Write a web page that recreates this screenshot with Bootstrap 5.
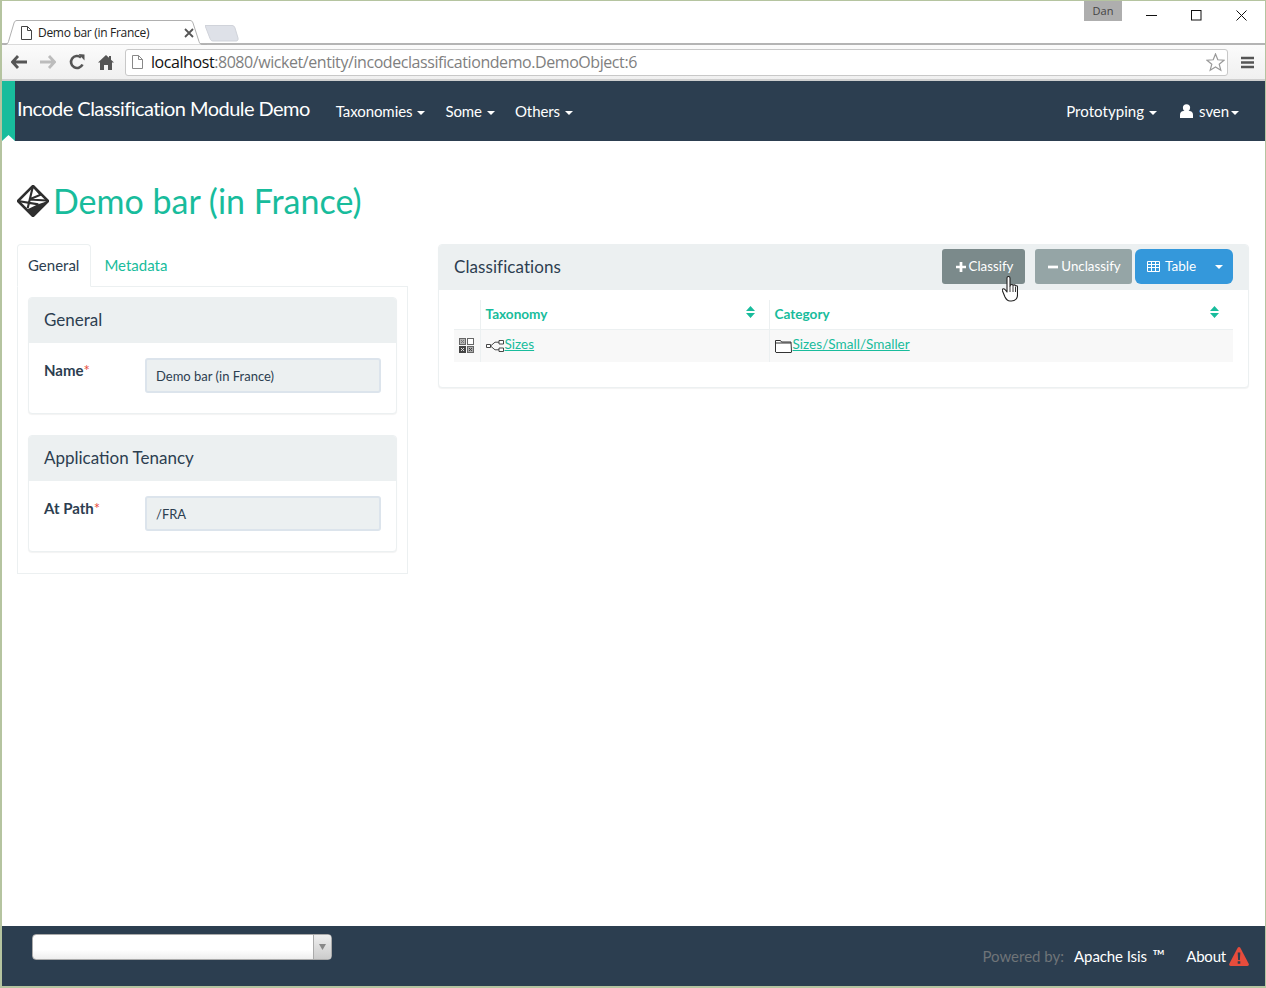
<!DOCTYPE html>
<html lang="en">
<head>
<meta charset="utf-8">
<title>Demo bar (in France)</title>
<link href="https://cdn.jsdelivr.net/npm/bootstrap@5.3.0/dist/css/bootstrap.min.css" rel="stylesheet">
<style>
html,body{height:100%}
body{font-family:"Lato","Liberation Sans",sans-serif;font-size:15px;color:#2c3e50;background:#fff;overflow:hidden}
.win-frame{width:1266px;height:988px;border:solid #b5c4a0;border-width:1px 1px 2px 2px;display:flex;flex-direction:column;overflow:hidden}
.tab-strip{height:44px;flex:none;display:flex;align-items:flex-start;background:#fff;border-bottom:2px solid #b4b4b4}
.chrome-tab{position:relative;width:203px;height:25px;margin:19px 0 0 2px;flex:none;display:flex;align-items:center;padding:0 13px 0 13px;font-family:"Open Sans","Liberation Sans",sans-serif;font-size:12px;letter-spacing:-.3px;color:#222}
.chrome-tab .tab-shape{position:absolute;left:0;top:0}
.chrome-tab>span,.chrome-tab>svg:not(.tab-shape){position:relative}
.tab-ic{margin:0 6px 0 4px}
.tab-new{margin:24px 0 0 -2px;flex:none}
.dan-tag{margin-left:auto;width:38px;height:20px;background:#aeaeae;color:#444;font-family:"Open Sans",sans-serif;font-size:11px;text-align:center;line-height:20px;flex:none}
.win-btns{display:flex;flex:none;margin:0 1px 0 7px}
.win-btns span{width:45px;height:28px;display:flex;align-items:center;justify-content:center}
.tool-bar{height:36px;flex:none;background:linear-gradient(#fbfbfb,#f0f0f0);border-bottom:2px solid #cfcfcf;display:flex;align-items:center;padding:0 11px 0 9px;gap:9px}
.tool-bar svg{flex:none}
.addr{flex:1;height:27px;margin-left:2px;background:#fff;border:1px solid #c8c8c8;border-radius:3px;display:flex;align-items:center;padding:0 2px 0 6px;font-family:"Open Sans","Liberation Sans",sans-serif;font-size:16px;color:#7f7f7f;letter-spacing:-.43px}
.addr b{font-weight:400;color:#111}
.site-nav{height:60px;flex:none;background:#2c3e50;padding:0;align-items:stretch;flex-wrap:nowrap}
.ribbon{width:13px;background:#18bc9c;flex:none;position:relative}
.ribbon::after{content:"";position:absolute;left:0;right:0;bottom:0;height:6px;background:#fff;clip-path:polygon(50% 0,100% 100%,0 100%)}
.site-nav .navbar-brand{color:#fff;font-size:20px;letter-spacing:-.55px;padding:0;margin:0 16px 0 2px;line-height:54px}
.site-nav .nav-link{color:#fff;font-size:15px;padding:0 10px;line-height:60px;letter-spacing:-.08px}
.site-nav .navbar-nav{flex-direction:row}
.site-nav .dropdown-toggle::after{border-top-width:4px;border-right-width:4px;border-left-width:4px;margin-left:5px;vertical-align:2px}
.right-nav{margin-right:16px}
.right-nav .nav-item:first-child .nav-link{letter-spacing:.05px}
.sven-link svg{margin-right:6px;vertical-align:-1px}
.site-nav .sven-link{padding-left:13px}
.site-nav .sven-link::after{margin-left:2px}
.page-body{flex:1;padding:0 16px 0 15px;min-height:0}
.page-title{color:#18bc9c;font-size:34px;font-weight:400;margin:38px 0 22px;line-height:43px;display:flex;align-items:center;gap:4px}
.cols{display:flex;gap:30px;align-items:flex-start}
.col-left{width:391px;flex:none}
.col-right{flex:1;min-width:0;position:relative}
.site-tabs{border-bottom:1px solid #ecf0f1;margin-bottom:0}
.site-tabs .nav-link{color:#18bc9c;font-size:15px;padding:10px 12px;line-height:21px;border-radius:4px 4px 0 0}
.site-tabs .nav-link.active{color:#2c3e50;padding:10px 11px 10px 10px;border-color:#ecf0f1 #ecf0f1 #fff}
.tab-body{border:1px solid #ecf0f1;border-top:0;padding:10px 10px 21px;display:flex;flex-direction:column;gap:21px}
.pane{border:1px solid #ecf0f1;border-radius:4px;box-shadow:0 1px 1px rgba(0,0,0,.05);--bs-card-bg:#fff}
.pane .card-header{background:#ecf0f1;border:0;border-radius:3px 3px 0 0;font-size:17px;line-height:24px;padding:10px 15px;height:45px;color:#2c3e50}
.field-row{display:flex;padding:15px;height:70px}
.field-label{width:101px;flex:none;font-weight:700;font-size:15px;padding-top:1px;line-height:22px}
.field-label i{color:#e74c3c;font-style:normal;font-weight:400}
.field-input{background:#ecf0f1!important;border:2px solid #dce4ec;border-radius:3px;height:35px;font-size:13px;padding:6px 9px;color:#2c3e50;flex:1;width:auto;min-width:0;opacity:1}
.pane .class-head{display:flex;align-items:flex-start;padding:4px 15px 0 15px}
.head-title{margin-right:auto;line-height:35px;letter-spacing:.08px}
.act-btn{font-size:13.3px;padding:0 10px;height:35px;line-height:33px;border-radius:3px;color:#fff;border:1px solid transparent;display:flex;align-items:center;gap:3px;white-space:nowrap}
.act-btn svg{margin-left:2px}
.act-classify{background:#7b8a8b;width:83px;margin-right:10px;justify-content:center}
.act-unclassify{background:#95a5a6;width:97px;margin-right:3px;justify-content:center}
.act-table{width:98px}
.act-table .btn{background:#3498db;color:#fff;border:0;font-size:13.5px;height:35px;padding:0;display:flex;align-items:center}
.act-table .btn:first-child{width:71px;padding-left:12px;gap:5px}
.act-table .btn:last-child{width:27px;justify-content:center}
.act-table .dropdown-toggle::after{margin:0;border-top-width:4px;border-right-width:4px;border-left-width:4px;vertical-align:0}
.class-wrap{padding:10px 15px 0 15px;height:97px}
.class-table{table-layout:fixed;width:100%;margin:0;--bs-table-bg:transparent;font-size:13.6px;border-collapse:collapse}
.class-table th{height:29px;padding:0 5px 1px;color:#18bc9c;font-weight:700;font-size:13.6px;border:0;border-bottom:1px solid #ecf0f1;position:relative;vertical-align:middle;line-height:20px}
.class-table td{height:33px;padding:0 5px 3px;background:#f8f8f8;border:0;vertical-align:middle;line-height:20px}
.class-table td+td,.class-table th+th{border-left:1px solid #ecf0f1}
.class-table a{color:#18bc9c;text-decoration:underline;margin-left:1px}
.sort-ic{position:absolute;top:6px;right:14px}
.cursor-hand{position:absolute;left:563px;top:31px}
.site-foot{height:60px;flex:none;background:#2c3e50;display:flex;padding:8px 16px 0 30px;font-size:15px}
.foot-select{width:300px;height:26px;background:linear-gradient(#fff 60%,#eee);border:1px solid #aaa;border-radius:4px;display:flex;justify-content:flex-end;overflow:hidden}
.foot-arrow{width:18px;border-left:1px solid #aaa;background:linear-gradient(#eee,#ccc);display:flex;align-items:center;justify-content:center;color:#888}
.foot-right{margin-left:auto;display:flex;align-items:center;height:44px;color:#fff}
.foot-right .dim{color:#6f7478;margin-right:10px}
.foot-right .isis{margin-right:21px;letter-spacing:-.1px}
.foot-right .isis span{font-size:17px;line-height:1;margin-left:2px}
.foot-about{letter-spacing:-.2px;margin-right:3px}
</style>
</head>
<body>
<div class="win-frame">
  <div class="tab-strip">
    <div class="chrome-tab">
      <svg class="tab-shape" width="203" height="25" viewBox="0 0 203 25"><path d="M0 24.500h1c2 0 2.800-1 3.500-3L10 3c.6-1.700 1.500-2.500 3-2.500h173c1.500 0 2.400.8 3 2.500l6 18.500c.7 2 1.500 3 3.500 3h5" fill="#fff" stroke="#b0b0b0"/></svg>
      <svg width="11" height="14" viewBox="0 0 11 14" class="tab-ic"><path d="M.5.500h6l4 4v9h-10zM6.500.5v4h4" fill="#fff" stroke="#444"/></svg>
      <span>Demo bar (in France)</span>
      <svg class="ms-auto" width="10" height="10" viewBox="0 0 10 10"><path d="M1 1l8 8M9 1L1 9" stroke="#555" stroke-width="1.800"/></svg>
    </div>
    <svg class="tab-new" width="34" height="17" viewBox="0 0 34 17"><path d="M0 .5h27c1.500 0 2.300.700 3 2.500l3 10c.5 2-.5 3-2 3H8c-1.500 0-2.500-1-3-2.500z" fill="#dee1e8" stroke="#d0d3da"/></svg>
    <div class="dan-tag">Dan</div>
    <div class="win-btns" aria-hidden="true">
      <span><svg width="11" height="11"><path d="M0 5.500h11" stroke="#111"/></svg></span>
      <span><svg width="11" height="11"><rect x=".5" y=".5" width="9.500" height="9.500" fill="none" stroke="#111"/></svg></span>
      <span><svg width="11" height="11"><path d="M.5.500l10 10M10.500.5l-10 10" stroke="#111"/></svg></span>
    </div>
  </div>
  <div class="tool-bar">
    <svg width="16" height="14" viewBox="0 0 16 14"><path d="M7 1L1.500 7 7 13M2 7h14" fill="none" stroke="#555" stroke-width="2.800"/></svg>
    <svg width="16" height="14" viewBox="0 0 16 14" class="ms-1"><path d="M9 1l5.500 6L9 13M14 7H0" fill="none" stroke="#bcbcbc" stroke-width="2.800"/></svg>
    <svg width="16" height="16" viewBox="0 0 16 16" class="ms-1"><path d="M13.500 10.500A6 6 0 1 1 12 3.500" fill="none" stroke="#555" stroke-width="2.600"/><path d="M9.500 0l6 .5v6z" fill="#555"/></svg>
    <svg width="16" height="15" viewBox="0 0 16 15" class="ms-1"><path d="M8 0l3 2.800V1h2v3.700l3 2.800h-2V15h-4v-5H6v5H2V7.500H0z" fill="#555"/></svg>
    <div class="addr">
      <svg width="11" height="14" viewBox="0 0 11 14" class="me-2"><path d="M.5.500h6l4 4v9h-10zM6.500.5v4h4" fill="#fff" stroke="#888"/></svg>
      <span><b>localhost</b>:8080/wicket/entity/incodeclassificationdemo.DemoObject:6</span>
      <svg class="ms-auto" width="19" height="19" viewBox="0 0 19 19"><path d="M9.500 1l2.300 5.800 6.200.4-4.800 4 1.600 6-5.300-3.300-5.300 3.300 1.600-6-4.800-4 6.200-.4z" fill="#fff" stroke="#999" stroke-width="1.200"/></svg>
    </div>
    <svg width="13" height="13" viewBox="0 0 13 13" class="ms-1"><path d="M0 2h13M0 6.500h13M0 11h13" stroke="#555" stroke-width="2.600"/></svg>
  </div>
  <nav class="navbar site-nav">
    <div class="ribbon"></div>
    <a class="navbar-brand" href="#">Incode Classification Module Demo</a>
    <ul class="navbar-nav">
      <li class="nav-item"><a class="nav-link dropdown-toggle" href="#">Taxonomies</a></li>
      <li class="nav-item"><a class="nav-link dropdown-toggle" href="#">Some</a></li>
      <li class="nav-item"><a class="nav-link dropdown-toggle" href="#">Others</a></li>
    </ul>
    <ul class="navbar-nav ms-auto right-nav">
      <li class="nav-item"><a class="nav-link dropdown-toggle" href="#">Prototyping</a></li>
      <li class="nav-item"><a class="nav-link dropdown-toggle sven-link" href="#"><svg width="13" height="14" viewBox="0 0 13 14"><circle cx="6.500" cy="3.800" r="3.600" fill="#fff"/><path d="M0 14v-3c0-2.500 1.500-4 3.500-4h6c2 0 3.500 1.500 3.500 4v3z" fill="#fff"/></svg>sven</a></li>
    </ul>
  </nav>
  <main class="page-body">
    <h1 class="page-title">
      <svg width="32" height="32" viewBox="0 0 33 33"><path d="M16.500 1L32 16.500 16.500 32 1 16.500z" fill="#fff" stroke="#2f2f2f" stroke-width="2.600" stroke-linejoin="round"/><path d="M16.500 32L32 16.500 21 20 11 25z" fill="#2f2f2f"/><path d="M16.500 1L11 24M1 16.500L22 20M16.500 1l8 9-12 5 18 1" fill="none" stroke="#2f2f2f" stroke-width="2.200"/></svg>
      Demo bar (in France)
    </h1>
    <div class="cols">
      <div class="col-left">
        <div class="nav nav-tabs site-tabs">
          <a class="nav-link active" href="#">General</a>
          <a class="nav-link" href="#">Metadata</a>
        </div>
        <div class="tab-body">
          <div class="card pane">
            <div class="card-header">General</div>
            <div class="field-row">
              <label class="field-label">Name<i>*</i></label>
              <input class="form-control field-input" value="Demo bar (in France)" disabled>
            </div>
          </div>
          <div class="card pane">
            <div class="card-header">Application Tenancy</div>
            <div class="field-row">
              <label class="field-label">At Path<i>*</i></label>
              <input class="form-control field-input" value="/FRA" disabled>
            </div>
          </div>
        </div>
      </div>
      <div class="col-right card pane">
        <div class="card-header class-head">
          <span class="head-title">Classifications</span>
          <a class="btn act-btn act-classify" href="#"><svg width="10" height="10" viewBox="0 0 11 11"><path d="M5.500 0v11M0 5.500h11" stroke="#fff" stroke-width="3"/></svg>Classify</a>
          <a class="btn act-btn act-unclassify" href="#"><svg width="10" height="10" viewBox="0 0 11 11"><path d="M0 5.500h11" stroke="#fff" stroke-width="3"/></svg>Unclassify</a>
          <div class="btn-group act-table">
            <button class="btn"><svg width="13" height="11" viewBox="0 0 13 11"><path d="M.5.500h12v10H.5zM.5 3.500h12M.5 6.500h12M4.500.5v10M8.500.5v10" fill="none" stroke="#fff"/></svg>Table</button>
            <button class="btn dropdown-toggle" aria-label="Table options"></button>
          </div>
        </div>
        <div class="class-wrap">
          <table class="table class-table">
            <colgroup><col style="width:26px"><col style="width:289px"><col></colgroup>
            <thead>
              <tr>
                <th></th>
                <th>Taxonomy<svg class="sort-ic" width="9" height="12" viewBox="0 0 9 12"><path d="M4.500 0L9 5H0zM4.500 12L0 7h9z" fill="#18bc9c"/></svg></th>
                <th>Category<svg class="sort-ic" width="9" height="12" viewBox="0 0 9 12"><path d="M4.500 0L9 5H0zM4.500 12L0 7h9z" fill="#18bc9c"/></svg></th>
              </tr>
            </thead>
            <tbody>
              <tr>
                <td><svg width="15" height="15" viewBox="0 0 15 15"><rect width="7" height="7" fill="#666"/><rect x="1" y="1" width="5" height="5" fill="#b5b5b5"/><rect x="2" y="2" width="1" height="1" fill="#777"/><rect x="4" y="2" width="1" height="1" fill="#777"/><rect x="3" y="3" width="1" height="1" fill="#777"/><rect x="2" y="4" width="1" height="1" fill="#777"/><rect x="4" y="4" width="1" height="1" fill="#777"/><rect x="8" width="7" height="7" fill="#666"/><rect x="9" y="1" width="5" height="5" fill="#fff"/><rect y="8" width="7" height="7" fill="#444"/><rect x="2" y="10" width="1" height="1" fill="#ddd"/><rect x="4" y="10" width="1" height="1" fill="#ddd"/><rect x="3" y="11" width="1" height="1" fill="#ddd"/><rect x="2" y="12" width="1" height="1" fill="#ddd"/><rect x="4" y="12" width="1" height="1" fill="#ddd"/><rect x="8" y="8" width="7" height="7" fill="#666"/><rect x="9" y="9" width="5" height="5" fill="#aaa"/><rect x="10" y="10" width="1" height="1" fill="#444"/><rect x="12" y="10" width="1" height="1" fill="#444"/><rect x="11" y="11" width="1" height="1" fill="#444"/><rect x="10" y="12" width="1" height="1" fill="#444"/><rect x="12" y="12" width="1" height="1" fill="#444"/></svg></td>
                <td><svg width="18" height="12" viewBox="0 0 18 12"><path d="M.5 4.500h4v3h-4zM13 .5h4.500v3.500H13zM13 8h4.500v3.500H13zM4.500 6L9 2.200h4M4.500 6L9 9.800h4" fill="#fff" stroke="#333" stroke-width=".9"/></svg><a href="#">Sizes</a></td>
                <td><svg width="17" height="14" viewBox="0 0 17 14"><path d="M.5 13V1.500h5l1 1.500h9.500l.5 10a.5.500 0 0 1-.5.500H1z" fill="#fff" stroke="#333"/><path d="M.5 4h15.500" stroke="#333"/></svg><a href="#">Sizes/Small/Smaller</a></td>
              </tr>
            </tbody>
          </table>
        </div>
        <svg class="cursor-hand" width="16" height="26" viewBox="0 0 16 26"><path d="M5 2c0-2 3-2 3 0v8l.5-1c1-1 2.500-.5 2.500.5 .5-1 2.500-.8 2.500.5 1-.5 2-.2 2 1v8c0 3-2 6-6 6H8c-3 0-4-2-5-4L.5 15c-1-2 1-3 2.500-1.500L5 16z" fill="#fff" stroke="#222" stroke-width="1.100" stroke-linejoin="round"/><path d="M8 10v6M11 10v6M13.500 11v5" stroke="#222" stroke-width=".9"/></svg>
      </div>
    </div>
  </main>
  <footer class="site-foot">
    <div class="foot-select"><div class="foot-arrow"><svg width="7" height="6" viewBox="0 0 7 6"><path d="M0 0h7L3.500 6z" fill="#888"/></svg></div></div>
    <div class="foot-right">
      <span class="dim">Powered by:</span>
      <span class="isis">Apache Isis <span>™</span></span>
      <span class="foot-about">About</span>
      <svg width="20" height="19" viewBox="0 0 20 19"><path d="M10 0c.6 0 1 .3 1.300.8l8.400 16c.5 1-.1 2.200-1.300 2.200H1.600C.4 19-.2 17.800.3 16.800L8.700.8C9 .3 9.400 0 10 0z" fill="#e74c3c"/><path d="M8.700 5.500h2.600l-.4 7.500H9.100zM8.700 14.300h2.600v2.500H8.700z" fill="#2c3e50"/></svg>
    </div>
  </footer>
</div>
<script src="https://cdn.jsdelivr.net/npm/bootstrap@5.3.0/dist/js/bootstrap.bundle.min.js"></script>
</body>
</html>
